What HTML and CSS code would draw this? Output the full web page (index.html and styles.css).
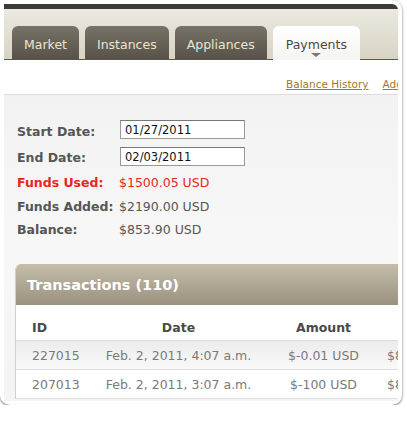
FILE: index.html
```html
<!DOCTYPE html>
<html lang="en">
<head>
  <meta charset="UTF-8">
  <title>Payments</title>
  <link rel="stylesheet" href="styles.css">
</head>
<body>
  <div class="frame">
    <div class="window">
      <div class="topbar"></div>

      <div class="tabbar">
        <a class="tab" href="#">Market</a>
        <a class="tab" href="#">Instances</a>
        <a class="tab" href="#">Appliances</a>
        <a class="tab active" href="#">Payments</a>
      </div>

      <div class="subnav">
        <a href="#">Balance History</a>
        <a href="#">Add Funds</a>
      </div>

      <div class="content">
        <div class="summary">
          <label for="start">Start Date:</label>
          <input type="text" id="start" value="01/27/2011">
          <label for="end">End Date:</label>
          <input type="text" id="end" value="02/03/2011">
          <div class="key used">Funds Used:</div>
          <div class="val used">$1500.05 USD</div>
          <div class="key">Funds Added:</div>
          <div class="val">$2190.00 USD</div>
          <div class="key">Balance:</div>
          <div class="val">$853.90 USD</div>
        </div>

        <div class="panel">
          <div class="panel-head">Transactions (110)</div>
          <table class="transactions">
            <thead>
              <tr>
                <th class="c-id">ID</th>
                <th class="c-date">Date</th>
                <th class="c-amount">Amount</th>
                <th class="c-balance">Balance</th>
              </tr>
            </thead>
            <tbody>
              <tr>
                <td class="c-id">227015</td>
                <td class="c-date">Feb. 2, 2011, 4:07 a.m.</td>
                <td class="c-amount">$-0.01 USD</td>
                <td class="c-balance">$853.90 USD</td>
              </tr>
              <tr>
                <td class="c-id">207013</td>
                <td class="c-date">Feb. 2, 2011, 3:07 a.m.</td>
                <td class="c-amount">$-100 USD</td>
                <td class="c-balance">$853.91 USD</td>
              </tr>
            </tbody>
          </table>
        </div>
      </div>
    </div>
  </div>
</body>
</html>
```

FILE: styles.css
```css
body {
  margin: 0;
  background-color: #fff;
  font-family: "DejaVu Sans", Verdana, sans-serif;
  color: #444;
}

.frame {
  width: 394px;
  height: 397px;
  padding: 4px;
  background-color: #fff;
  border-radius: 0 10px 10px 10px;
  box-shadow: 0 1px 3px rgba(0,0,0,0.55);
}

.window {
  height: 100%;
  overflow: hidden;
  border-radius: 0 6px 0 0;
  background: linear-gradient(#efefef, #f7f7f7 60%, #f4f4f4);
}

.topbar {
  height: 5px;
  background-color: #3b3b39;
}

/* tabs */
.tabbar {
  height: 51px;
  display: flex;
  align-items: flex-end;
  gap: 6px;
  padding-left: 8px;
  box-sizing: border-box;
  background: linear-gradient(#ebe9e0, #d8d4c4);
  border-bottom: 1px solid #5c5849;
}

.tab {
  height: 33px;
  line-height: 37px;
  padding: 0 12px;
  border-radius: 6px 6px 0 0;
  background: linear-gradient(#767267, #57534a);
  color: #eae6cf;
  font-size: 12.5px;
  text-decoration: none;
}

.tab.active {
  position: relative;
  padding: 0 13px;
  background: linear-gradient(#fff, #f4f4f2);
  color: #4a4a4a;
  margin-bottom: -1px;
  height: 34px;
}

.tab.active::after {
  content: "";
  position: absolute;
  left: 50%;
  bottom: 3px;
  margin-left: -5px;
  border-left: 5px solid transparent;
  border-right: 5px solid transparent;
  border-top: 4px solid #777;
}

.subnav {
  height: 35px;
  display: flex;
  align-items: flex-end;
  gap: 14px;
  padding: 0 0 4px 282px;
  box-sizing: border-box;
  background-color: #fff;
  border-bottom: 1px solid #dcdcdc;
  white-space: nowrap;
}

.subnav a {
  color: #a17a1e;
  font-size: 10.5px;
}

/* summary */
.content {
  padding: 25px 0 0 11px;
}

.summary {
  display: grid;
  grid-template-columns: 104px 126px;
  row-gap: 4.5px;
  align-items: center;
  font-size: 12.5px;
}

.summary label,
.key {
  font-weight: bold;
  color: #555;
  padding-left: 2px;
}

.summary input {
  width: 125px;
  height: 19px;
  box-sizing: border-box;
  margin: 0 0 3px 1px;
  padding: 1px 4px 0;
  border: 1px solid #999;
  border-top-color: #777;
  font-family: "DejaVu Sans", Verdana, sans-serif;
  font-size: 11.5px;
  color: #111;
}

.key,
.val {
  height: 19px;
  line-height: 19px;
}

.val {
  color: #555;
  white-space: nowrap;
}

.used {
  color: #e8271a;
}

/* transactions */
.panel {
  margin-top: 25px;
  width: 500px;
  background-color: #fff;
  border-left: 1px solid #cfcfcf;
  border-radius: 6px 0 0 0;
  overflow: hidden;
}

.panel-head {
  height: 41px;
  line-height: 43px;
  padding-left: 11px;
  background: linear-gradient(#c3bdaa, #9a927e);
  color: #fff;
  font-size: 14.5px;
  font-weight: bold;
}

.transactions {
  border-collapse: collapse;
  table-layout: fixed;
  width: 500px;
  font-size: 12.5px;
  white-space: nowrap;
}

.transactions th,
.transactions td {
  box-sizing: border-box;
}

.transactions th {
  height: 35px;
  padding-top: 12px;
  color: #4a4a4a;
  border-bottom: 1px solid #dadada;
}

.transactions td {
  height: 29px;
  padding-top: 2px;
  color: #7a7a7a;
  border-bottom: 1px solid #dedede;
}

.transactions tbody tr:first-child {
  background: linear-gradient(#ebebeb, #f9f9f9);
}

.c-id {
  width: 75px;
  padding-left: 16px;
  text-align: left;
}

.c-date {
  width: 175px;
  text-align: center;
}

.c-amount {
  width: 115px;
  text-align: center;
}

.c-balance {
  padding-left: 6px;
  text-align: left;
}

th.c-balance {
  padding-left: 40px;
}
```
